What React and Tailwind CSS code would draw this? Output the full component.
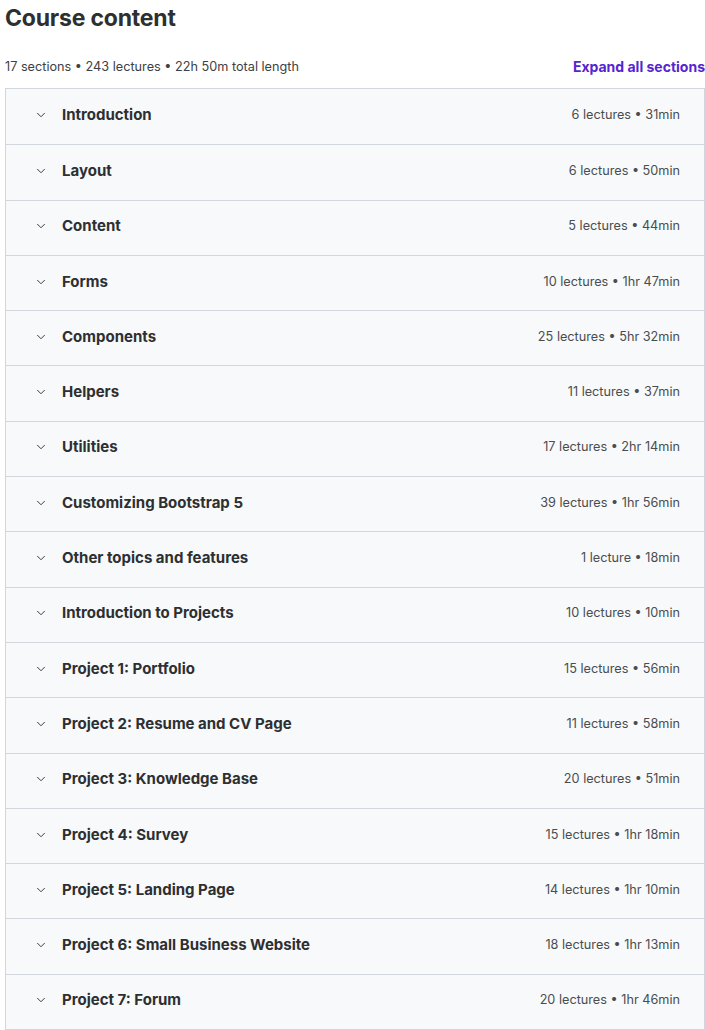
import { ChevronDown } from 'lucide-react';

const sections = [
  ['Introduction', '6 lectures • 31min'],
  ['Layout', '6 lectures • 50min'],
  ['Content', '5 lectures • 44min'],
  ['Forms', '10 lectures • 1hr 47min'],
  ['Components', '25 lectures • 5hr 32min'],
  ['Helpers', '11 lectures • 37min'],
  ['Utilities', '17 lectures • 2hr 14min'],
  ['Customizing Bootstrap 5', '39 lectures • 1hr 56min'],
  ['Other topics and features', '1 lecture • 18min'],
  ['Introduction to Projects', '10 lectures • 10min'],
  ['Project 1: Portfolio', '15 lectures • 56min'],
  ['Project 2: Resume and CV Page', '11 lectures • 58min'],
  ['Project 3: Knowledge Base', '20 lectures • 51min'],
  ['Project 4: Survey', '15 lectures • 1hr 18min'],
  ['Project 5: Landing Page', '14 lectures • 1hr 10min'],
  ['Project 6: Small Business Website', '18 lectures • 1hr 13min'],
  ['Project 7: Forum', '20 lectures • 1hr 46min'],
];

export default function App() {
  return (
    <div className="w-[705px] bg-white pl-[5px] font-['Inter',sans-serif] text-[#2d2f31]">
      <h2 className="pt-[4px] text-[23px] font-bold leading-[28px] tracking-[-0.2px]">Course content</h2>
      <div className="mt-[26px] flex items-center justify-between">
        <span className="text-[12.7px] leading-[18px] text-[#3e4143]">
          17 sections • 243 lectures • 22h 50m total length
        </span>
        <button type="button" className="text-[14px] font-bold leading-[18px] text-[#5624d0]">
          Expand all sections
        </button>
      </div>
      <div className="mt-[12px] border border-[#d1d7dc]">
        {sections.map(([title, meta], i) => (
          <div
            key={title}
            className={`flex h-[55.3px] items-center justify-between bg-[#f7f9fa] pb-[3px] pl-[28px] pr-[24px] ${i > 0 ? 'border-t border-[#d1d7dc]' : ''}`}
          >
            <div className="flex items-center gap-[14px]">
              <ChevronDown size={14} strokeWidth={1.6} className="text-[#2d2f31]" aria-hidden="true" />
              <span className="text-[15px] font-bold leading-[20px]">{title}</span>
            </div>
            <span className="text-[12.7px] leading-[18px] text-[#4a4d50]">{meta}</span>
          </div>
        ))}
      </div>
    </div>
  );
}
